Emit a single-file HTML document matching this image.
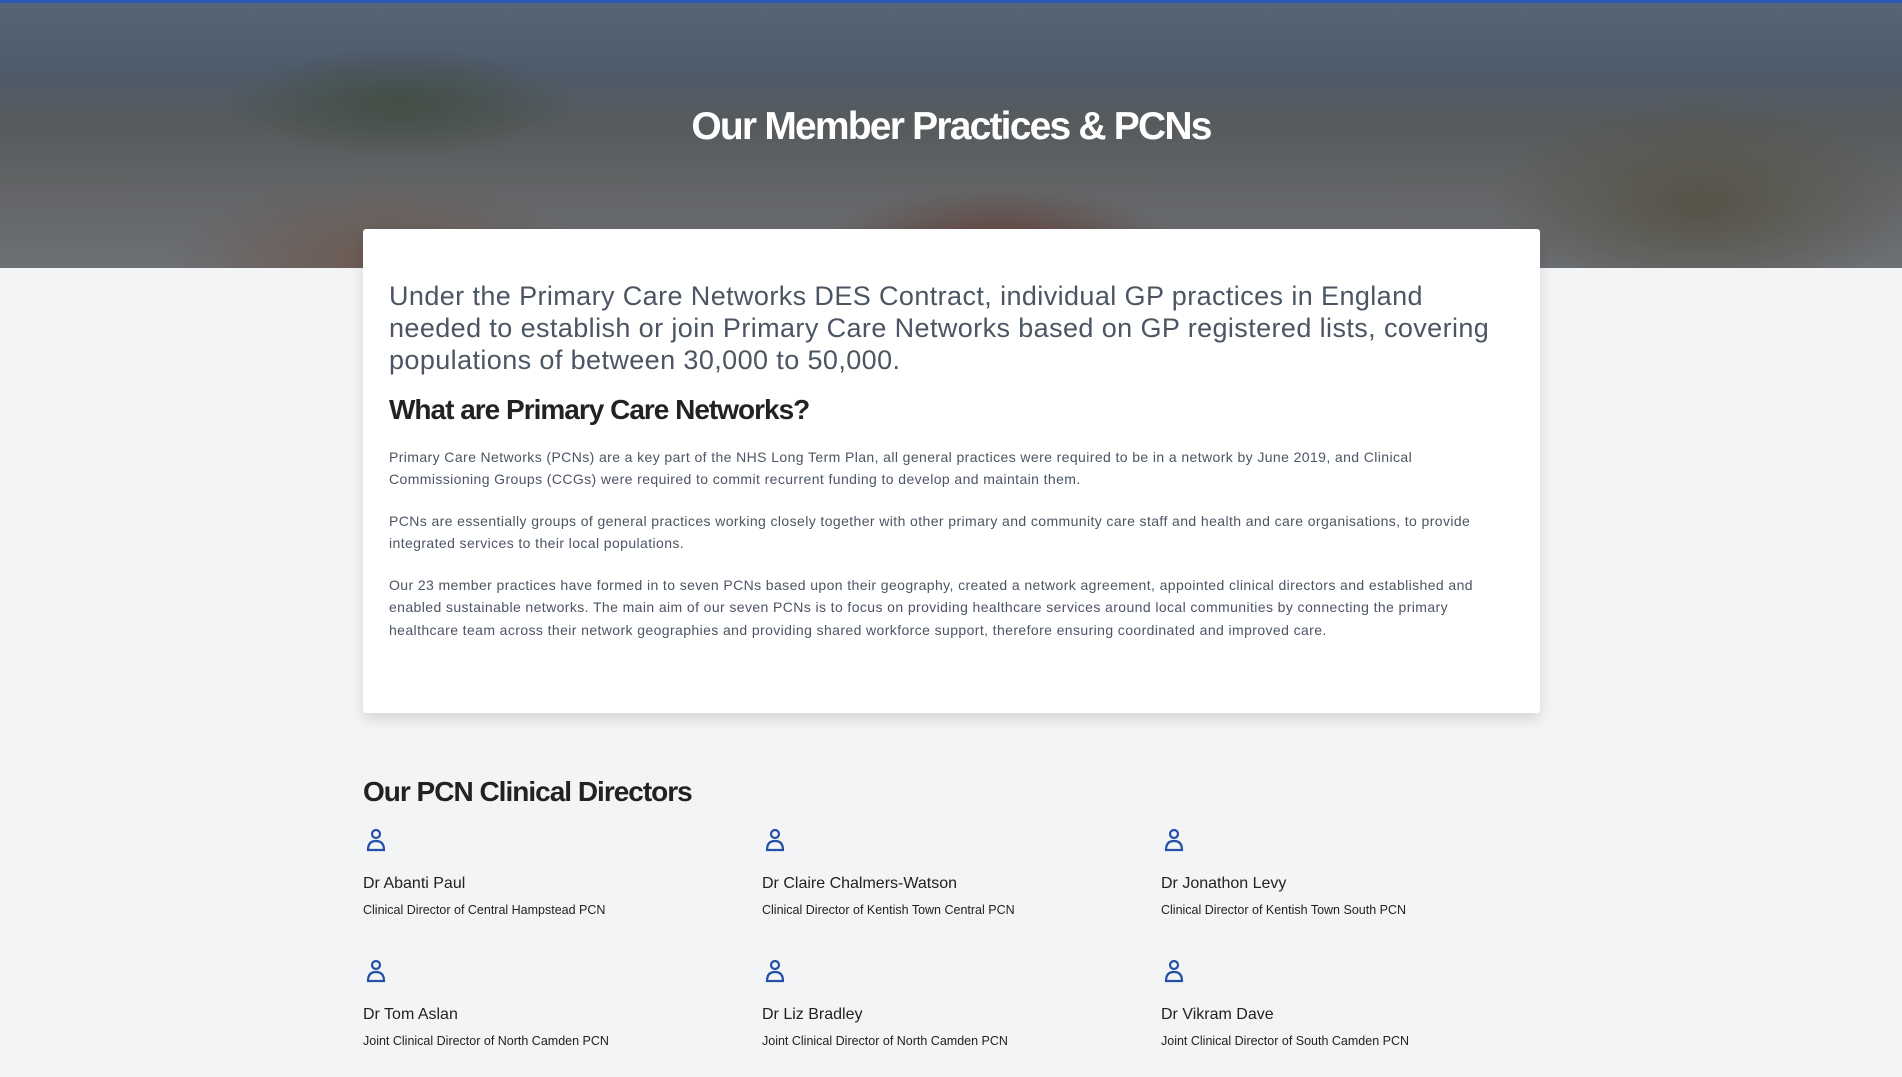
<!DOCTYPE html>
<html><head><meta charset="utf-8"><style>
*{margin:0;padding:0;box-sizing:border-box}
body{width:1902px;height:1077px;overflow:hidden;background:#f3f4f6;font-family:"Liberation Sans",sans-serif;color:#374151;position:relative}
.hero{position:absolute;left:0;top:0;width:1902px;height:268px;border-top:3px solid #2b58b5;
background:
linear-gradient(rgba(40,50,70,.3),rgba(40,50,70,.3)),
radial-gradient(ellipse 300px 120px at 380px 260px,#8a6a55 0,transparent 70%),
radial-gradient(ellipse 250px 80px at 1000px 240px,#7a4a38 0,transparent 70%),
radial-gradient(ellipse 300px 150px at 1700px 200px,#6a6248 0,transparent 70%),
radial-gradient(ellipse 250px 80px at 400px 100px,#4d5a45 0,transparent 70%),
linear-gradient(180deg,#6b7a8c 0,#5f6d7c 25%,#6a6c66 45%,#7c7a74 70%,#8a8a88 100%)}
.hero h1{position:absolute;left:0;right:0;top:102px;text-align:center;color:#fff;font-size:39px;font-weight:bold;letter-spacing:-1.8px}
.card{position:absolute;left:363px;top:229px;width:1177px;height:484px;background:#fff;border-radius:3px;box-shadow:0 6px 14px rgba(0,0,0,.12);padding:0 26px}
.lead{position:absolute;left:26px;top:51px;white-space:nowrap;font-size:27px;line-height:32px;color:#4b5563;letter-spacing:.4px}
.card h2{position:absolute;left:26px;top:165px;font-size:28px;font-weight:bold;color:#222;letter-spacing:-1px}
.p{position:absolute;left:26px;white-space:nowrap;font-size:14px;line-height:22.4px;color:#4b5563;letter-spacing:.4px}
.dh{position:absolute;left:363px;top:776px;font-size:28px;font-weight:bold;color:#222;letter-spacing:-1px}
.d{position:absolute;width:400px}
.d svg{position:absolute;left:3px;top:0}
.d .n{position:absolute;left:0;top:47px;font-size:16px;color:#222;white-space:nowrap}
.d .r{position:absolute;left:0;top:75px;font-size:12.5px;color:#222;white-space:nowrap}
</style></head><body>
<div class="hero"><h1>Our Member Practices &amp; PCNs</h1></div>
<div class="card">
<div class="lead">Under the Primary Care Networks DES Contract, individual GP practices in England<br>needed to establish or join Primary Care Networks based on GP registered lists, covering<br>populations of between 30,000 to 50,000.</div>
<h2>What are Primary Care Networks?</h2>
<div class="p" style="top:217px">Primary Care Networks (PCNs) are a key part of the NHS Long Term Plan, all general practices were required to be in a network by June 2019, and Clinical<br>Commissioning Groups (CCGs) were required to commit recurrent funding to develop and maintain them.</div>
<div class="p" style="top:281px">PCNs are essentially groups of general practices working closely together with other primary and community care staff and health and care organisations, to provide<br>integrated services to their local populations.</div>
<div class="p" style="top:345px">Our 23 member practices have formed in to seven PCNs based upon their geography, created a network agreement, appointed clinical directors and established and<br>enabled sustainable networks. The main aim of our seven PCNs is to focus on providing healthcare services around local communities by connecting the primary<br>healthcare team across their network geographies and providing shared workforce support, therefore ensuring coordinated and improved care.</div>
</div>
<div class="dh">Our PCN Clinical Directors</div>
<svg width="0" height="0" style="position:absolute"><defs><g id="u" fill="none" stroke="#2450a8" stroke-width="2.2"><circle cx="10" cy="6" r="4"/><path d="M2 22 Q2 13 10 13 Q18 13 18 22 Z"/></g></defs></svg>
<div class="d" style="left:363px;top:828px"><svg width="22" height="24"><use href="#u"/></svg><div class="n">Dr Abanti Paul</div><div class="r">Clinical Director of Central Hampstead PCN</div></div>
<div class="d" style="left:762px;top:828px"><svg width="22" height="24"><use href="#u"/></svg><div class="n">Dr Claire Chalmers-Watson</div><div class="r">Clinical Director of Kentish Town Central PCN</div></div>
<div class="d" style="left:1161px;top:828px"><svg width="22" height="24"><use href="#u"/></svg><div class="n">Dr Jonathon Levy</div><div class="r">Clinical Director of Kentish Town South PCN</div></div>
<div class="d" style="left:363px;top:959px"><svg width="22" height="24"><use href="#u"/></svg><div class="n">Dr Tom Aslan</div><div class="r">Joint Clinical Director of North Camden PCN</div></div>
<div class="d" style="left:762px;top:959px"><svg width="22" height="24"><use href="#u"/></svg><div class="n">Dr Liz Bradley</div><div class="r">Joint Clinical Director of North Camden PCN</div></div>
<div class="d" style="left:1161px;top:959px"><svg width="22" height="24"><use href="#u"/></svg><div class="n">Dr Vikram Dave</div><div class="r">Joint Clinical Director of South Camden PCN</div></div>
</body></html>
